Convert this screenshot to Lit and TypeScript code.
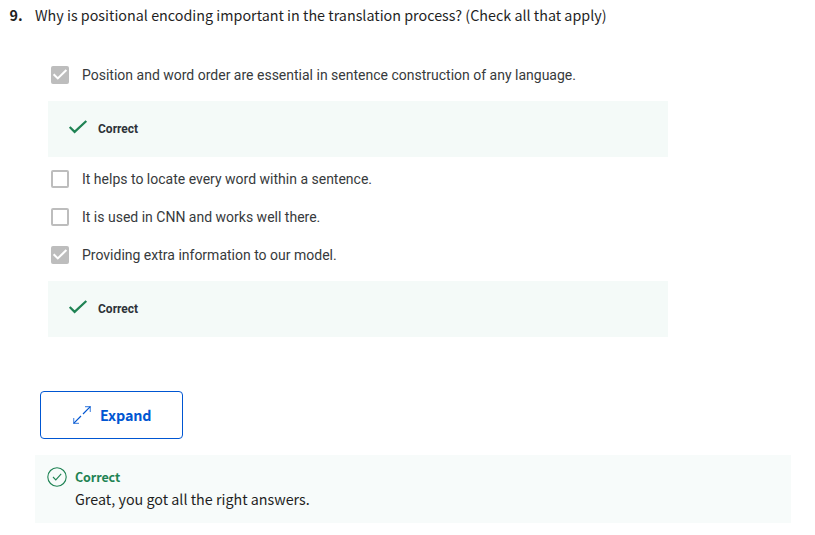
import { LitElement, html, css, nothing } from "lit";
import { customElement } from "lit/decorators.js";

@customElement("quiz-option")
class QuizOption extends LitElement {
  static properties = { label: {}, checked: { type: Boolean } };
  declare label: string;
  declare checked: boolean;

  static styles = css`
    :host { display: block; }
    .row { display: flex; align-items: center; height: 38px; padding-left: 3px; }
    .box { box-sizing: border-box; width: 18px; height: 18px; border: 2px solid #bdbdbd; border-radius: 2px; margin-right: 13px; flex: none; }
    .box.on { background: #bdbdbd; }
    .tick { display: block; width: 18px; height: 18px; margin: -2px; }
    .label { font: 400 14px/20px Roboto, sans-serif; color: #373a3c; white-space: nowrap; }
    .feedback { display: flex; align-items: center; box-sizing: border-box; width: 620px; height: 56px; margin-top: 7px; padding-left: 20px; background: #f4faf8; }
    .gap { height: 3px; }
    .mark { width: 20px; height: 16px; margin: -4px 10px 0 0; }
    .verdict { font: 700 12px/16px Roboto, sans-serif; color: #2d3238; }
  `;

  render() {
    return html`
      <div class="row">
        <span class="box ${this.checked ? "on" : ""}">
          ${this.checked
            ? html`<svg class="tick" viewBox="0 0 18 18"><path d="M2.6 8.2 6.8 12.4 15.4 4.1" fill="none" stroke="#fff" stroke-width="2.1" /></svg>`
            : nothing}
        </span>
        <span class="label">${this.label}</span>
      </div>
      ${this.checked
        ? html`<div class="feedback">
              <svg class="mark" viewBox="0 0 20 16"><path d="M1.7 8 6.6 12.9 18.3 2" fill="none" stroke="#1f8354" stroke-width="2.2" /></svg>
              <span class="verdict">Correct</span>
            </div>
            <div class="gap"></div>`
        : nothing}
    `;
  }
}

@customElement("app-root")
class AppRoot extends LitElement {
  static styles = css`
    :host { display: block; height: 535px; overflow: hidden; background: #fff; color: #1f1f1f; font-family: "Noto Sans CJK SC", sans-serif; }
    .question { display: flex; box-sizing: border-box; height: 32px; padding-top: 3px; font-size: 14.33px; line-height: 24px; white-space: nowrap; }
    .number { box-sizing: border-box; width: 35px; padding-left: 9.5px; font-weight: 700; }
    .options { padding: 24px 0 0 48px; }
    .expand { display: flex; align-items: center; box-sizing: border-box; width: 143px; height: 48px; margin: 51px 0 16px 40px; padding: 0 0 0 32px; border: 1px solid #0056d2; border-radius: 4px; background: #fff; color: #0056d2; font: 700 14.32px/24px "Noto Sans CJK SC", sans-serif; letter-spacing: -0.1px; }
    .arrows { width: 18px; height: 18px; margin-right: 9px; }
    .result { display: flex; box-sizing: border-box; width: 756px; height: 68px; margin-left: 35px; padding: 12px; background: #f7fbfa; }
    .ring { width: 20px; height: 20px; margin-right: 8px; }
    .title { font-size: 12.53px; line-height: 20px; font-weight: 700; letter-spacing: -0.1px; color: #1f8354; }
    .message { font-size: 14.32px; line-height: 24px; }
  `;

  private options = [
    { label: "Position and word order are essential in sentence construction of any language.", checked: true },
    { label: "It helps to locate every word within a sentence.", checked: false },
    { label: "It is used in CNN and works well there.", checked: false },
    { label: "Providing extra information to our model.", checked: true },
  ];

  render() {
    return html`
      <div class="question">
        <span class="number">9.</span>
        <span class="prompt">Why is positional encoding important in the translation process? (Check all that apply)</span>
      </div>
      <div class="options">
        ${this.options.map((o) => html`<quiz-option .label=${o.label} .checked=${o.checked}></quiz-option>`)}
      </div>
      <button class="expand">
        <svg class="arrows" viewBox="0 0 18 18" fill="none" stroke="#0056d2" stroke-width="1">
          <path d="M10 8 17.3.7M8 10 .7 17.3" stroke-width="1.2" />
          <path d="M12 .7h5.3V6M.7 12v5.3H6" stroke-width="1.2" stroke-opacity=".65" />
        </svg>
        <span>Expand</span>
      </button>
      <div class="result">
        <svg class="ring" viewBox="0 0 20 20" fill="none" stroke="#1f8354" stroke-width="1.1">
          <circle cx="10" cy="10" r="9.2" />
          <path d="m6 10 2.8 2.9 5.4-6" />
        </svg>
        <div>
          <div class="title">Correct</div>
          <div class="message">Great, you got all the right answers.</div>
        </div>
      </div>
    `;
  }
}
